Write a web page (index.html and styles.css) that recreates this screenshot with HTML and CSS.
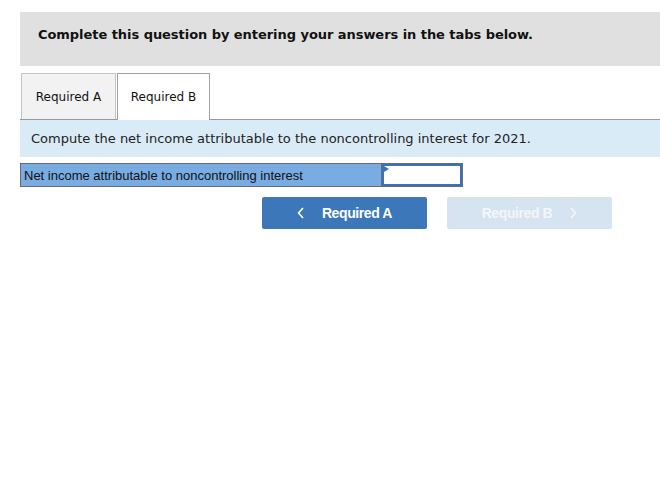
FILE: index.html
```html
<!DOCTYPE html>
<html>
<head>
<meta charset="utf-8">
<link rel="stylesheet" href="styles.css">
</head>
<body>
<div class="page">
  <div class="intro">Complete this question by entering your answers in the tabs below.</div>
  <div class="tabs">
    <div class="tab tab-a">Required A</div>
    <div class="tab tab-b">Required B</div>
  </div>
  <div class="instruction">Compute the net income attributable to the noncontrolling interest for 2021.</div>
  <div class="answer-row">
    <div class="label-cell">Net income attributable to noncontrolling interest</div>
    <div class="input-cell"><span class="flag"></span></div>
  </div>
  <div class="nav">
    <button class="btn btn-prev">
      <svg class="chev" width="8" height="12" viewBox="0 0 8 12"><polyline points="6,1 1.5,6 6,11" fill="none" stroke="#fff" stroke-width="1.6"/></svg>
      <span>Required A</span>
    </button>
    <button class="btn btn-next">
      <span>Required B</span>
      <svg class="chev" width="8" height="12" viewBox="0 0 8 12"><polyline points="2,1 6.5,6 2,11" fill="none" stroke="#f3f6fa" stroke-width="1.6"/></svg>
    </button>
  </div>
</div>
</body>
</html>
```
FILE: styles.css
```css
html, body {
  margin: 0;
  padding: 0;
  background: #fff;
}
.page {
  padding: 12px 0 0 20px;
  font-family: "DejaVu Sans", Verdana, sans-serif;
  color: #111;
}
.intro {
  background: #e0e0e0;
  height: 54px;
  box-sizing: border-box;
  padding: 15px 0 0 18px;
  font-size: 13px;
  font-weight: bold;
  line-height: 16px;
  letter-spacing: -0.05px;
}
.tabs {
  display: flex;
  gap: 1px;
  margin-top: 7px;
  padding-left: 1px;
  border-bottom: 1px solid #999;
  height: 46px;
}
.tab {
  box-sizing: border-box;
  height: 47px;
  border: 1px solid #c4c4c4;
  border-bottom: none;
  display: flex;
  align-items: center;
  justify-content: center;
  font-size: 12px;
  color: #111;
}
.tab-a {
  width: 95px;
  background: #f2f2f2;
  height: 46px;
}
.tab-b {
  width: 93px;
  background: #fff;
  border-color: #a0a0a0;
  position: relative;
  z-index: 1;
}
.instruction {
  background: #daebf8;
  height: 37px;
  box-sizing: border-box;
  padding: 11px 0 0 11px;
  font-size: 13px;
  line-height: 16px;
  color: #222;
}
.answer-row {
  display: flex;
  margin-top: 6px;
  width: 443px;
  height: 24px;
  box-sizing: border-box;
  border: 1px solid #6b6b6b;
}
.label-cell {
  width: 361px;
  background: #78ace2;
  font-family: "Liberation Sans", Arial, sans-serif;
  font-size: 13px;
  line-height: 20px;
  padding: 2px 0 0 3px;
  box-sizing: border-box;
  color: #111;
  border-right: 1px solid #6b6b6b;
}
.input-cell {
  flex: 1;
  background: #fff;
  border: 2px solid #3b73b9;
  position: relative;
}
.flag {
  position: absolute;
  left: 0;
  top: 0;
  width: 0;
  height: 0;
  border-top: 3px solid transparent;
  border-bottom: 3px solid transparent;
  border-left: 5px solid #3b73b9;
}
.nav {
  display: flex;
  gap: 20px;
  margin-top: 10px;
  padding-left: 242px;
}
.btn {
  width: 165px;
  height: 32px;
  border: none;
  border-radius: 2px;
  display: flex;
  align-items: center;
  justify-content: center;
  gap: 17px;
  font-family: "Liberation Sans", Arial, sans-serif;
  font-weight: bold;
  font-size: 14px;
  letter-spacing: -0.4px;
  padding: 0;
}
.btn-prev {
  background: #3b77b9;
  color: #fff;
}
.btn-next {
  background: #d6e3f0;
  color: #f3f6fa;
}
.chev {
  display: block;
}
```
